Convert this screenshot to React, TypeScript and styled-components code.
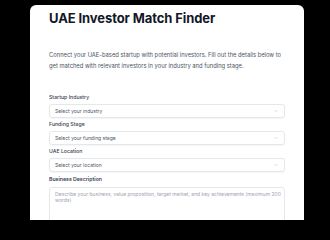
import React from "react";
import styled, { createGlobalStyle } from "styled-components";

const Global = createGlobalStyle`
  html, body { margin: 0; padding: 0; background: #000; }
  body { font-family: Inter, "Noto Sans", sans-serif; -webkit-font-smoothing: antialiased; }
  * { box-sizing: border-box; }
`;

const Page = styled.div`
  width: 330px;
  height: 220px;
  overflow: hidden;
  background: #000;
  padding: 5px 26px 0 30px;
`;

const Card = styled.div`
  background: #fff;
  border-radius: 6px 6px 0 0;
  padding: 5px 19px 0 19px;
  height: 215px;
  overflow: hidden;
  display: flex;
  flex-direction: column;
`;

const Title = styled.h1`
  margin: 0;
  font-size: 13px;
  line-height: 16px;
  font-weight: 700;
  color: #111827;
  letter-spacing: -0.1px;
`;

const Intro = styled.p`
  margin: 24px 0 0 0;
  font-size: 5.8px;
  line-height: 10.5px;
  color: #4b5563;
`;

const Form = styled.div`
  margin-top: 22px;
  display: flex;
  flex-direction: column;
`;

const Field = styled.div<{ $spaced?: boolean }>`
  display: flex;
  flex-direction: column;
  gap: 2.5px;
  margin-bottom: 2.5px;
  margin-top: ${(p) => (p.$spaced ? "1px" : "0")};
`;

const Label = styled.label<{ $strong?: boolean }>`
  font-size: 5.2px;
  line-height: 8px;
  font-weight: ${(p) => (p.$strong ? 600 : 500)};
  color: #374151;
`;

const Select = styled.div`
  height: 14px;
  border: 0.5px solid #e5e7eb;
  border-radius: 3px;
  display: flex;
  align-items: center;
  justify-content: space-between;
  padding: 0 6px 0 5px;
  font-size: 5px;
  color: #4b5563;
  box-shadow: 0 0.5px 1px rgba(0, 0, 0, 0.04);
`;

const Chevron = styled.svg`
  width: 4px;
  height: 4px;
  color: #9ca3af;
`;

const TextArea = styled.div`
  margin-top: 1.5px;
  height: 60px;
  border: 0.5px solid #e5e7eb;
  border-radius: 3px;
  padding: 2.5px 3px 2.5px 5px;
  font-size: 5px;
  line-height: 6.5px;
  color: #9ca3af;
`;

const selects = [
  { label: "Startup Industry", placeholder: "Select your industry" },
  { label: "Funding Stage", placeholder: "Select your funding stage" },
  { label: "UAE Location", placeholder: "Select your location" },
];

export default function App() {
  return (
    <>
      <Global />
      <Page>
        <Card>
          <Title>UAE Investor Match Finder</Title>
          <Intro>
            Connect your UAE-based startup with potential investors. Fill out the details below to
            get matched with relevant investors in your industry and funding stage.
          </Intro>
          <Form>
            {selects.map((s) => (
              <Field key={s.label}>
                <Label>{s.label}</Label>
                <Select>
                  <span>{s.placeholder}</span>
                  <Chevron viewBox="0 0 24 24" fill="none" stroke="currentColor" strokeWidth={2.5} strokeLinecap="round" strokeLinejoin="round">
                    <path d="m6 9 6 6 6-6" />
                  </Chevron>
                </Select>
              </Field>
            ))}
            <Field $spaced>
              <Label $strong>Business Description</Label>
              <TextArea>
                Describe your business, value proposition, target market, and key achievements (maximum 200 words)
              </TextArea>
            </Field>
          </Form>
        </Card>
      </Page>
    </>
  );
}
